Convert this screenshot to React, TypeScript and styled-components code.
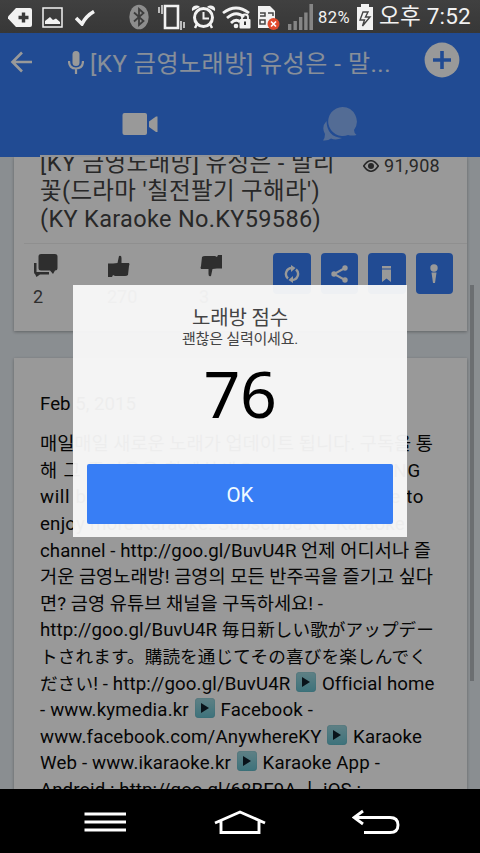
import React, { useLayoutEffect, useRef, useState } from "react";
import styled, { createGlobalStyle } from "styled-components";

const GlobalStyle = createGlobalStyle`
  * { box-sizing: border-box; }
  body { margin: 0; background: #000; overflow: hidden; }
`;

const sans = `Roboto, "Noto Sans CJK KR", sans-serif`;

const Screen = styled.div`
  width: 480px;
  height: 853px;
  display: flex;
  flex-direction: column;
  font-family: ${sans};
  overflow: hidden;
`;

const StatusBar = styled.header`
  height: 33px;
  flex: none;
  display: flex;
  align-items: center;
  background: linear-gradient(#404040, #373737);
  color: #f2f2f2;
`;

const Spaced = styled.div<{ $left?: number; $drop?: number }>`
  display: flex;
  flex: none;
  margin-left: ${(p) => p.$left ?? 0}px;
  margin-top: ${(p) => p.$drop ?? 0}px;
`;

const Stage = styled.div`
  position: relative;
  height: 756px;
  flex: none;
  display: flex;
  flex-direction: column;
`;

const Header = styled.div`
  height: 124px;
  flex: none;
  background: #387ef5;
  color: #fff;
`;

const TitleBar = styled.div`
  height: 60px;
  padding: 0 20px 0 10px;
  display: flex;
  align-items: center;
`;

const HeaderTitle = styled.div`
  font-size: 24px;
  line-height: 31px;
  color: #e3eeff;
`;

const Tabs = styled.div`
  height: 64px;
  padding: 0 40px;
  display: grid;
  grid-template-columns: 1fr 1fr;
`;

const Tab = styled.div<{ $active?: boolean }>`
  display: flex;
  align-items: center;
  justify-content: center;
  opacity: ${(p) => (p.$active ? 1 : 0.42)};
  border-bottom: 2px solid ${(p) => (p.$active ? "#f4f6fa" : "transparent")};
`;

const Scroll = styled.main`
  flex: 1;
  min-height: 0;
  padding: 0 13px 0 14px;
  display: flex;
  flex-direction: column;
  gap: 27px;
  overflow: hidden;
  background: #e6edf2;
`;

const Card = styled.section<{ $height: number }>`
  height: ${(p) => p.$height}px;
  flex: none;
  background: #fff;
  box-shadow: 0 1px 3px rgba(0, 0, 0, 0.3);
`;

const SongHead = styled.div`
  height: 87px;
  margin: 0 0 0 10px;
  padding: 0 27px 0 16px;
  display: flex;
  justify-content: space-between;
  border-bottom: 1px solid #eee;
`;

const SongTitle = styled.div`
  margin-top: -8px;
  font-size: 23.5px;
  line-height: 28px;
  color: #444;
`;

const Views = styled.div`
  height: 18px;
  display: flex;
  align-items: center;
  gap: 5px;
  color: #444;
  font-size: 18px;
  line-height: 18px;
`;

const Actions = styled.div`
  display: flex;
  padding: 9px 14px 0 19px;
`;

const Counter = styled.div<{ $width: number }>`
  width: ${(p) => p.$width}px;
  display: flex;
  flex-direction: column;
  gap: 9px;
  color: #4d4d4d;
  font-size: 18px;
  line-height: 22px;
`;

const ActionButtons = styled.div`
  margin-left: auto;
  display: flex;
  gap: 10px;
`;

const ActionButton = styled.button`
  width: 37.5px;
  height: 41px;
  padding: 0;
  border: 0;
  border-radius: 4px;
  display: flex;
  align-items: center;
  justify-content: center;
  background: #387ef5;
  color: #fff;
`;

const Detail = styled.div`
  padding: 33px 26px 0;
  font-size: 18.67px;
  line-height: 26.6px;
  color: #0a0a0a;
`;

const Posted = styled.div`
  margin-bottom: 13.6px;
`;

const Line = styled.div`
  height: 1lh;
  white-space: pre;
`;

const Fitted = styled.span`
  display: inline-block;
  white-space: pre;
`;

const Japanese = styled.span`
  font-family: "Noto Sans CJK JP", sans-serif;
  font-size: 17.6px;
  line-height: 1;
`;

const PlayBadge = styled.span`
  display: inline-flex;
  width: 20px;
  height: 20px;
  margin: -3px 1px 3px;
  vertical-align: middle;
  align-items: center;
  justify-content: center;
  border-radius: 4px;
  background: linear-gradient(#9fd6de, #66bfce);
  box-shadow: inset 0 0 1px #4596a4;
`;

const Thumb = styled.div`
  position: absolute;
  right: 6px;
  top: 252px;
  width: 4px;
  height: 396px;
  background: #b2b8bd;
`;

const Backdrop = styled.div`
  position: absolute;
  inset: 0;
  background: rgba(0, 0, 0, 0.4);
`;

const Dialog = styled.div`
  position: absolute;
  left: 73px;
  top: 252px;
  width: 334px;
  height: 252px;
  padding: 21px 14px 13px;
  display: flex;
  flex-direction: column;
  align-items: center;
  background: rgba(248, 248, 248, 0.955);
  color: #444;
`;

const DialogTitle = styled.div`
  font-size: 20px;
  line-height: 25px;
`;

const DialogText = styled.div`
  font-size: 15px;
  line-height: 17px;
`;

const Score = styled.div`
  font-family: "Noto Sans", sans-serif;
  font-size: 64.5px;
  line-height: 80px;
  margin-top: 5px;
  color: #000;
`;

const Confirm = styled.button`
  width: 306px;
  height: 60px;
  margin-top: auto;
  padding: 2px 0 0 0;
  border: 0;
  border-radius: 2px;
  background: #387ef5;
  color: #effaff;
  font-family: ${sans};
  font-size: 20.5px;
`;

const NavBar = styled.nav`
  height: 64px;
  flex: none;
  display: flex;
  align-items: center;
  justify-content: space-between;
  padding: 1px 80px 0 83px;
  background: #000;
`;

const Text = styled.span<{ $size: number; $weight?: number }>`
  font-size: ${(p) => p.$size}px;
  line-height: ${(p) => p.$size * 1.3}px;
  font-weight: ${(p) => p.$weight ?? 400};
`;

/** A single line whose tracking is adjusted so that it spans `width` pixels. */
function Fit({ width, children }: { width: number; children: React.ReactNode }) {
  const ref = useRef<HTMLSpanElement>(null);
  const [tracking, setTracking] = useState(0);
  useLayoutEffect(() => {
    const el = ref.current;
    if (!el) return;
    const count = (el.textContent || "").length;
    setTracking((width - el.getBoundingClientRect().width) / Math.max(1, count));
  }, [width]);
  return (
    <Fitted ref={ref} style={{ letterSpacing: tracking }}>
      {children}
    </Fitted>
  );
}

function Svg({ w, h, box, children }: { w: number; h: number; box?: string; children: React.ReactNode }) {
  return (
    <svg width={w} height={h} viewBox={box ?? `0 0 ${w} ${h}`} fill="currentColor">
      {children}
    </svg>
  );
}

const Play = () => (
  <PlayBadge>
    <Svg w={8} h={10}>
      <path d="M0 0L8 5L0 10Z" fill="#10202c" />
    </Svg>
  </PlayBadge>
);

function Status() {
  return (
    <StatusBar>
      <Spaced $left={8} $drop={1}>
        <Svg w={24} h={19}>
          <path d="M8 0H22Q24 0 24 2V17Q24 19 22 19H8L0 10.5V8.5Z" />
          <path d="M15.5 4.5V14.5M10.5 9.5H20.5" stroke="#3a3a3a" strokeWidth="3.4" />
        </Svg>
      </Spaced>
      <Spaced $left={10} $drop={1}>
        <Svg w={21} h={21}>
          <rect x="1" y="1" width="19" height="19" fill="none" stroke="currentColor" strokeWidth="1.5" />
          <path d="M3 17V14L8 10L11 13L14 11.5L18 15V17Z" />
        </Svg>
      </Spaced>
      <Spaced $left={12} $drop={2}>
        <Svg w={20} h={16}>
          <path d="M1 8L7 14Q11 6 19 1.5" fill="none" stroke="currentColor" strokeWidth="3.6" />
        </Svg>
      </Spaced>
      <Spaced $left={34}>
        <Svg w={20} h={26}>
          <ellipse cx="10" cy="13" rx="9.7" ry="12.3" fill="#8d8d8d" />
          <path d="M5 8.5L14.5 17L10 21V5L14.5 9L5 17.5" fill="none" stroke="#3d3d3d" strokeWidth="1.8" />
        </Svg>
      </Spaced>
      <Spaced $left={9}>
        <Svg w={27} h={26}>
          <path d="M7 2H20V24H7Z" fill="none" stroke="currentColor" strokeWidth="2.6" />
          <path d="M1 3V9M4 1V10M23 17V26M26 18V24" stroke="currentColor" strokeWidth="1.4" />
        </Svg>
      </Spaced>
      <Spaced $left={6}>
        <Svg w={25} h={25}>
          <circle cx="12.5" cy="13.5" r="9" fill="none" stroke="currentColor" strokeWidth="3" />
          <path d="M12.5 8V14.5H18" fill="none" stroke="currentColor" strokeWidth="2" />
          <path d="M1 7Q0 2 5 1.5Q8 1 9 3ZM24 7Q25 2 20 1.5Q17 1 16 3Z" />
          <path d="M6 20L4 24M19 20L21 24" stroke="currentColor" strokeWidth="2.5" />
        </Svg>
      </Spaced>
      <Spaced $left={6} $drop={2}>
        <Svg w={30} h={23}>
          <g fill="none" stroke="currentColor" strokeWidth="2.8">
            <path d="M1 7Q14 -3 27 7" />
            <path d="M5 12Q14 4 22 11" />
            <path d="M9 17Q14 12 18 16" />
          </g>
          <circle cx="14" cy="20" r="2.3" />
          <rect x="17.5" y="13" width="11" height="9.5" rx="1" />
          <path d="M20 13V11Q20 8.5 23 8.5Q26 8.5 26 11V13" fill="none" stroke="currentColor" strokeWidth="1.8" />
          <path d="M23 15.5V19" stroke="#333" strokeWidth="2" />
        </Svg>
      </Spaced>
      <Spaced $left={6}>
        <Svg w={22} h={26}>
          <path d="M0 2H12L17 7V24H0Z" />
          <path d="M2 9H7V12H2M10 9H15V12M2 16V20H7V16Z" fill="none" stroke="#444" strokeWidth="1.5" />
          <circle cx="15.5" cy="20" r="6" fill="#e04a2c" />
          <path d="M13 17.5L18 22.5M18 17.5L13 22.5" stroke="#fff" strokeWidth="1.6" />
        </Svg>
      </Spaced>
      <Spaced $left={8}>
        <Svg w={26} h={26}>
          <path d="M0 20H3.4V26H0ZM5.5 17H8.9V26H5.5ZM11 13H14.4V26H11ZM16.2 8.5H19.6V26H16.2ZM21.4 0H25V26H21.4Z" fill="#858585" />
        </Svg>
      </Spaced>
      <Spaced $left={4} $drop={2}>
        <Text $size={16.5}><Fit width={32}>82%</Fit></Text>
      </Spaced>
      <Spaced $left={7}>
        <Svg w={16} h={26}>
          <path d="M4 0H12V3H16V26H0V3H4Z" />
          <path d="M6 8L3 16H7.5L5.5 22L13 13H8.5L11 8Z" fill="none" stroke="#444" strokeWidth="1.4" />
        </Svg>
      </Spaced>
      <Spaced $left={6} $drop={1}>
        <Text $size={22.5}><Fit width={92}>오후 7:52</Fit></Text>
      </Spaced>
    </StatusBar>
  );
}

function AppHeader() {
  return (
    <Header>
      <TitleBar>
        <Spaced $drop={-2}>
          <Svg w={23} h={22}>
            <path d="M22 11H3M12 1.5L2.5 11L12 20.5" fill="none" stroke="currentColor" strokeWidth="2.6" />
          </Svg>
        </Spaced>
        <Spaced $left={35}>
          <Svg w={16} h={24}>
            <rect x="4.5" y="0" width="7" height="15" rx="3.5" />
            <path d="M1 10Q1 17.5 8 17.5Q15 17.5 15 10M8 17V23" fill="none" stroke="currentColor" strokeWidth="2.2" />
          </Svg>
        </Spaced>
        <Spaced $left={6} $drop={3}>
          <HeaderTitle><Fit width={301}>[KY 금영노래방] 유성은 - 말...</Fit></HeaderTitle>
        </Spaced>
        <Spaced $left={33} $drop={-6}>
          <Svg w={36} h={36}>
            <circle cx="18" cy="18" r="17.4" />
            <path d="M18 9V27M9 18H27" stroke="#387ef5" strokeWidth="3.6" />
          </Svg>
        </Spaced>
      </TitleBar>
      <Tabs>
        <Tab $active>
          <Svg w={36} h={24}>
            <rect x="0.5" y="1" width="24.5" height="22" rx="2" />
            <path d="M27 9.5L34 4.5H35.5V20H34L27 15Z" />
          </Svg>
        </Tab>
        <Tab>
          <Svg w={36} h={36}>
            <path d="M20.5 1A14.5 14.5 0 1 0 26 29Q30 30 34.5 29Q32 27 32 24A14.5 14.5 0 0 0 20.5 1Z" />
            <path d="M4.5 15Q-1 21 3 28Q3 32 1 34.5Q6 35 9 32.5Q14 34.5 20 32Q5 31 4.5 15Z" />
          </Svg>
        </Tab>
      </Tabs>
    </Header>
  );
}

const thumb = "M1 8.5H6L10.5 8L12 1Q14.5 0 14.5 3V8H22Q23 9 22 11L21 20Q20 21 18 21H8L6 20L5 22H1Z";

function SongCard() {
  return (
    <Card $height={174}>
      <SongHead>
        <SongTitle>
          <Line><Fit width={295}>[KY 금영노래방] 유성은 - 말리</Fit></Line>
          <Line><Fit width={280}>꽃(드라마 '칠전팔기 구해라')</Fit></Line>
          <Line><Fit width={281}>(KY Karaoke No.KY59586)</Fit></Line>
        </SongTitle>
        <Views>
          <Svg w={16} h={12}>
            <path d="M.7 6Q8-4.5 15.3 6Q8 16.5 .7 6Z" fill="none" stroke="currentColor" strokeWidth="1.6" />
            <circle cx="8" cy="6" r="3" />
          </Svg>
          <Fit width={56}>91,908</Fit>
        </Views>
      </SongHead>
      <Actions>
        <Counter $width={74}>
          <Svg w={25} h={24}>
            <path d="M8 1H22Q24.5 1 24.5 3.5V15Q24.5 17.5 22 17.5L20 21L17 17.5H8Q5.5 17.5 5.5 15V3.5Q5.5 1 8 1Z" />
            <path d="M1 10H3.5V19H16V21.5H7L3.5 24L2 21Q1 21 1 19Z" />
          </Svg>
          2
        </Counter>
        <Counter $width={92}>
          <Svg w={24} h={24} box="0 -2 24 24"><path d={thumb} /></Svg>
          270
        </Counter>
        <Counter $width={40}>
          <Svg w={24} h={24} box="-1 -2 24 24"><path d={thumb} transform="rotate(180 11.5 11)" /></Svg>
          3
        </Counter>
        <ActionButtons>
          <ActionButton>
            <Svg w={16} h={18}>
              <path d="M8 3A6 6 0 0 0 4 13.5M8 15A6 6 0 0 0 12 4.5" fill="none" stroke="currentColor" strokeWidth="2.4" />
              <path d="M7 0L11.5 3L7 7ZM9 11L4.5 15L9 18Z" />
            </Svg>
          </ActionButton>
          <ActionButton>
            <Svg w={17} h={18}>
              <path d="M14 3L3 9L14 15" fill="none" stroke="currentColor" strokeWidth="2" />
              <circle cx="14" cy="3" r="2.7" /><circle cx="3" cy="9" r="2.7" /><circle cx="14" cy="15" r="2.7" />
            </Svg>
          </ActionButton>
          <ActionButton>
            <Svg w={9} h={16}><path d="M0 0H9V2.5H0ZM0 3.5H9V16L4.5 12.5L0 16Z" /></Svg>
          </ActionButton>
          <ActionButton>
            <Svg w={8} h={20}><circle cx="4" cy="4" r="3.7" /><path d="M1.5 8.5H6.5L5 19H3Z" /></Svg>
          </ActionButton>
        </ActionButtons>
      </Actions>
    </Card>
  );
}

const description: { width: number; text: React.ReactNode }[] = [
  { width: 393, text: "매일매일 새로운 노래가 업데이트 됩니다. 구독을 통" },
  { width: 381, text: "해 그 즐거움을 함께하세요! New KUMYOUNG" },
  { width: 384, text: "will be updated everyday. Subscribe here to" },
  { width: 365, text: "enjoy more Karaoke. Subscribe KY Karaoke" },
  { width: 391, text: "channel - http://goo.gl/BuvU4R 언제 어디서나 즐" },
  { width: 393, text: "거운 금영노래방! 금영의 모든 반주곡을 즐기고 싶다" },
  { width: 283, text: "면? 금영 유튜브 채널을 구독하세요! -" },
  { width: 394, text: <>http://goo.gl/BuvU4R <Japanese>毎日新しい歌がアップデー</Japanese></> },
  { width: 387, text: <Japanese>トされます。購読を通じてその喜びを楽しんでく</Japanese> },
  { width: 393, text: <><Japanese>ださい</Japanese>! - http://goo.gl/BuvU4R <Play /> Official home</> },
  { width: 273, text: <>- www.kymedia.kr <Play /> Facebook -</> },
  { width: 382, text: <>www.facebook.com/AnywhereKY <Play /> Karaoke</> },
  { width: 340, text: <>Web - www.ikaraoke.kr <Play /> Karaoke App -</> },
  { width: 321, text: "Android : http://goo.gl/68BF9A ㅣ iOS :" },
];

export default function App() {
  return (
    <>
      <GlobalStyle />
      <Screen>
        <Status />
        <Stage>
          <AppHeader />
          <Scroll>
            <SongCard />
            <Card $height={460}>
              <Detail>
                <Posted><Fit width={96}>Feb 5, 2015</Fit></Posted>
                {description.map((line, i) => (
                  <Line key={i}><Fit width={line.width}>{line.text}</Fit></Line>
                ))}
              </Detail>
            </Card>
          </Scroll>
          <Thumb />
          <Backdrop />
          <Dialog>
            <DialogTitle><Fit width={96}>노래방 점수</Fit></DialogTitle>
            <DialogText><Fit width={116}>괜찮은 실력이세요.</Fit></DialogText>
            <Score><Fit width={73}>76</Fit></Score>
            <Confirm>OK</Confirm>
          </Dialog>
        </Stage>
        <NavBar>
          <Svg w={44} h={22}>
            <path d="M1.5 3H43M1.5 11H43M1.5 19H43" stroke="#fff" strokeWidth="2.9" />
          </Svg>
          <Svg w={52} h={26}>
            <path d="M1 14L26 3L51 14M7 12V23.5H45V12" fill="none" stroke="#fff" strokeWidth="2.9" />
          </Svg>
          <Svg w={48} h={26}>
            <path d="M11 2L2 8.5L11 15M2 8.5H38Q46 8.5 46 16Q46 23.5 38 23.5H12" fill="none" stroke="#fff" strokeWidth="2.9" />
          </Svg>
        </NavBar>
      </Screen>
    </>
  );
}
